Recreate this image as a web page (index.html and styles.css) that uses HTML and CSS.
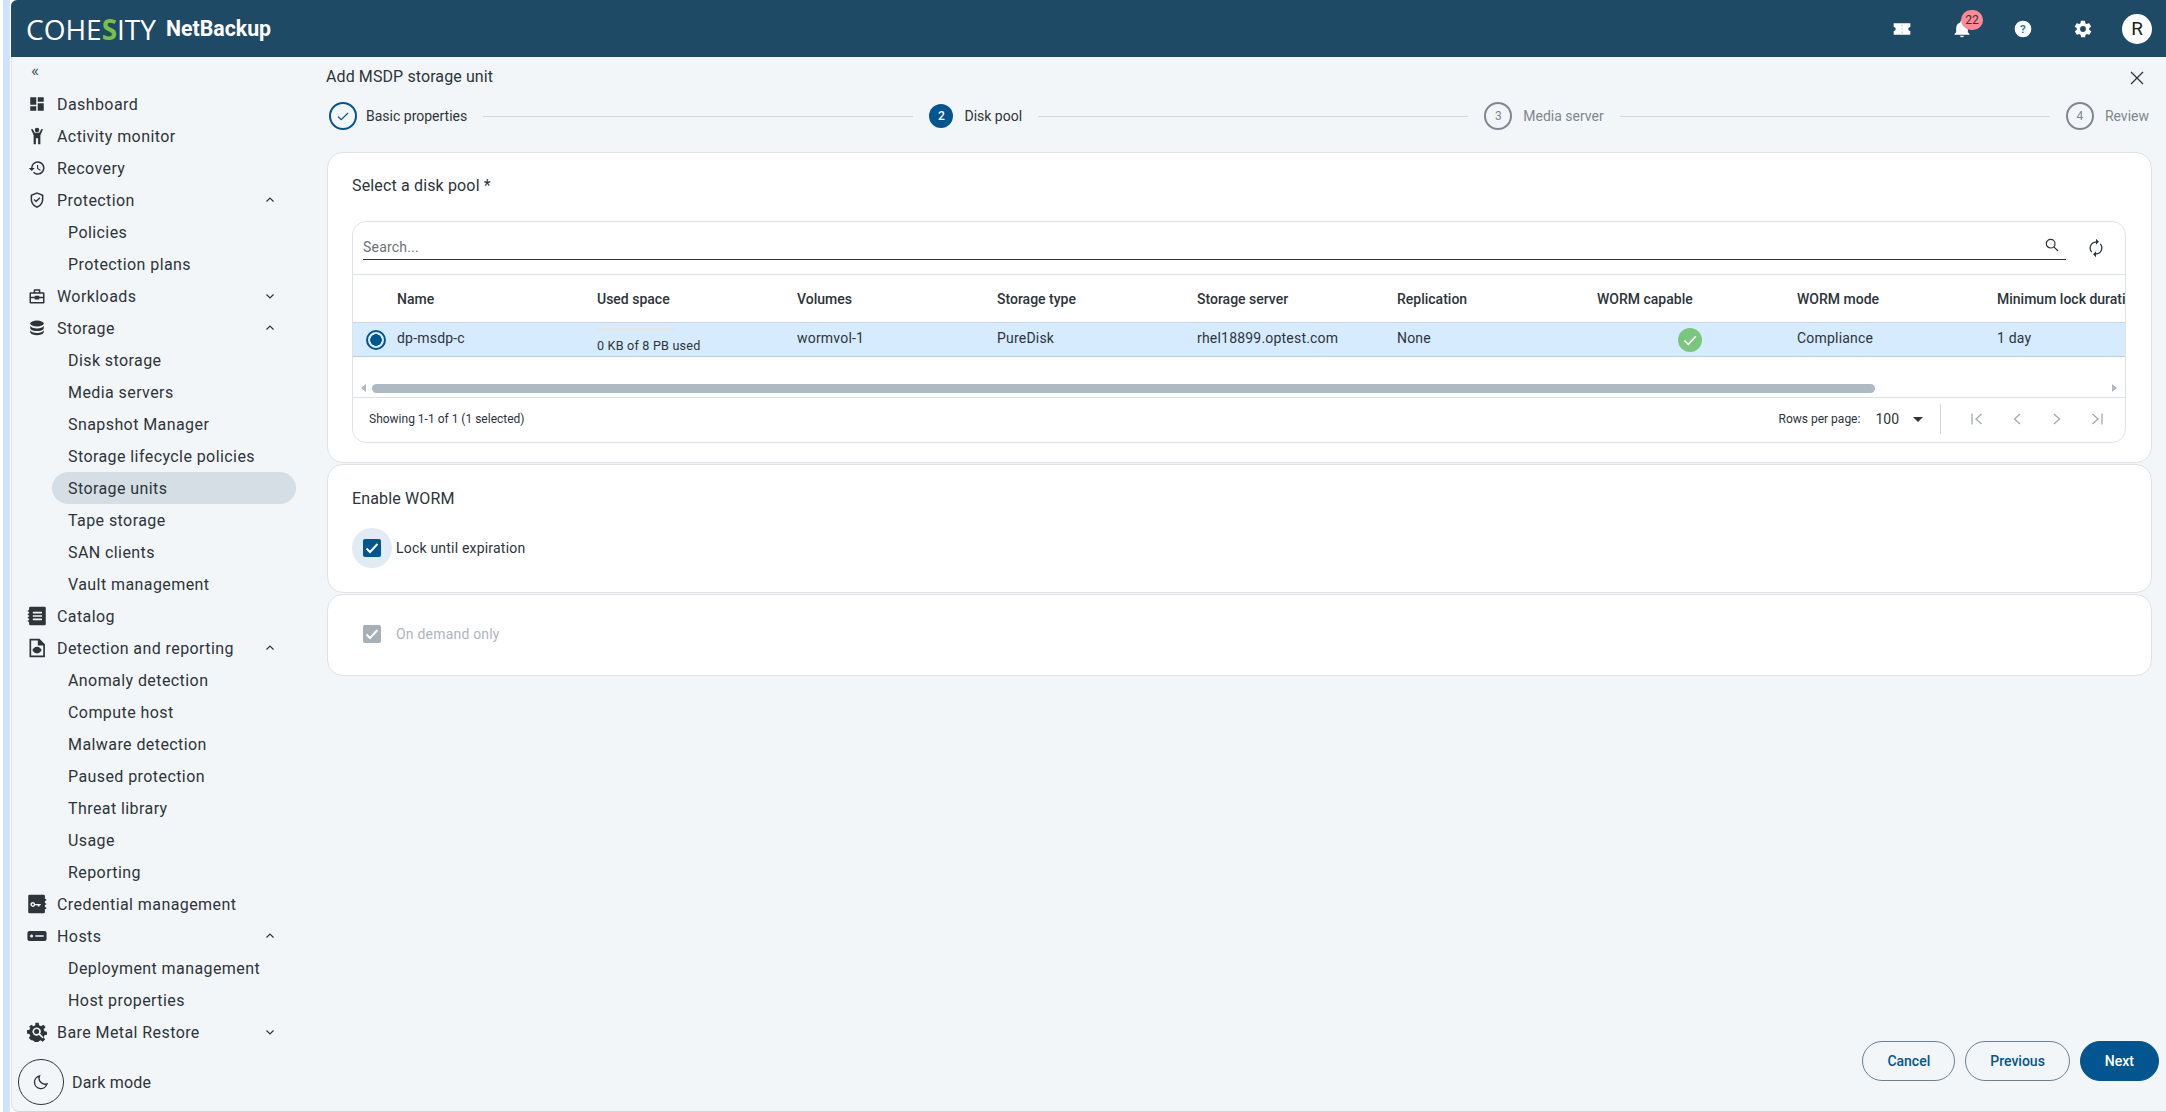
FILE: index.html
```html
<!DOCTYPE html>
<html lang="en">

<head>
	<meta charset="UTF-8">
	<title>Add MSDP storage unit</title>
	<link rel="stylesheet" href="styles.css">
</head>

<body>
	<div class="app">
		<header class="topbar">
			<div class="brand"><span class="logo">COHE<span class="logo-s">S</span>ITY</span><span class="product">NetBackup</span></div>
			<div class="top-icons">
				<svg class="top-icon" viewBox="0 0 24 24"><path fill="#fff" d="M2 5h20v4.500a2.500 2.500 0 0 0 0 5V19H2v-4.500a2.500 2.500 0 0 0 0-5z"/><path stroke="#9cc" stroke-width="1.500" stroke-dasharray="2 2" d="M12 7v11"/></svg>
				<div class="bell"><svg class="top-icon" viewBox="0 0 24 24"><path fill="#fff" d="M12 22a2.500 2.500 0 0 0 2.400-2H9.600A2.500 2.500 0 0 0 12 22zm7-6v-5c0-3.300-1.800-6-5-6.800V3.500a2 2 0 0 0-4 0v.700C6.800 5 5 7.700 5 11v5l-2 2v1h18v-1z"/></svg><span class="badge">22</span></div>
				<svg class="top-icon" viewBox="0 0 24 24"><circle cx="12" cy="12" r="10" fill="#fff"/><text x="12" y="17" text-anchor="middle" class="help-mark">?</text></svg>
				<svg class="top-icon" viewBox="0 0 24 24"><path fill="#fff" d="M19.400 13c0-.300.100-.700.100-1s0-.700-.100-1l2.100-1.600c.200-.200.200-.400.100-.600l-2-3.500c-.100-.200-.400-.300-.600-.200l-2.500 1c-.500-.400-1.100-.700-1.700-1l-.400-2.600c0-.300-.200-.400-.500-.400h-4c-.200 0-.500.100-.500.400l-.400 2.600c-.600.300-1.200.600-1.700 1l-2.500-1c-.200-.100-.500 0-.600.200l-2 3.500c-.100.200-.100.500.100.600L4.600 11c0 .300-.100.700-.100 1s0 .700.100 1l-2.100 1.600c-.200.200-.200.400-.100.600l2 3.500c.100.200.400.300.600.200l2.500-1c.500.400 1.100.700 1.700 1l.400 2.600c0 .300.300.400.500.400h4c.300 0 .500-.100.500-.400l.400-2.600c.600-.300 1.200-.600 1.700-1l2.500 1c.200.100.500 0 .600-.200l2-3.500c.100-.200.100-.500-.100-.600zM12 15.500a3.500 3.500 0 1 1 0-7 3.500 3.500 0 0 1 0 7z"/></svg>
				<div class="avatar">R</div>
			</div>
		</header>

		<div class="body-row">
			<nav class="sidebar">
				<div class="collapse">«</div>
				<ul class="nav">
					<li class="nav-item"><svg class="nav-icon" viewBox="0 0 24 24"><path d="M3 3h8v10H3zM13 3h8v6h-8zM13 11h8v10h-8zM3 15h8v6H3z"/></svg>Dashboard</li>
					<li class="nav-item"><svg class="nav-icon" viewBox="0 0 24 24"><circle cx="12" cy="4" r="3"/><path d="M4 3l2 -.5 3 5h6l3-5 2 .5-3.500 8v12h-3v-8h-3v8h-3V11z"/></svg>Activity monitor</li>
					<li class="nav-item"><svg class="nav-icon" viewBox="0 0 24 24"><path d="M13 3a9 9 0 0 0-9 9H1l4 4 4-4H6a7 7 0 1 1 2.100 5l-1.400 1.400A9 9 0 1 0 13 3zm-1 5v5l4.300 2.500.7-1.200-3.500-2.100V8z"/></svg>Recovery</li>
					<li class="nav-item"><svg class="nav-icon" viewBox="0 0 24 24"><path fill-rule="evenodd" d="M12 1.500L3.500 5v6c0 5.200 3.600 10 8.500 11.500 4.900-1.500 8.500-6.300 8.500-11.500V5zm0 2.200l6.500 2.700V11c0 4.200-2.800 8.200-6.500 9.400-3.700-1.200-6.500-5.200-6.500-9.400V6.400z"/><path d="M10.800 15.200l-3.300-3.300 1.300-1.300 2 2 4.400-4.400 1.300 1.300z"/></svg>Protection<svg class="chev" viewBox="0 0 12 12"><path d="M2.500 7.500L6 4l3.500 3.500"/></svg></li>
					<li class="nav-sub">Policies</li>
					<li class="nav-sub">Protection plans</li>
					<li class="nav-item"><svg class="nav-icon" viewBox="0 0 24 24"><path d="M9 3a1.500 1.500 0 0 0-1.500 1.500V7H3.500A1.500 1.500 0 0 0 2 8.500v12A1.500 1.500 0 0 0 3.500 22h17a1.500 1.500 0 0 0 1.500-1.500v-12A1.500 1.500 0 0 0 20.500 7h-4V4.500A1.500 1.500 0 0 0 15 3zm.500 2h5v2h-5zM4 9h16v4h-5v-1.500H9V13H4zm0 6h5v1.500h6V15h5v5H4z"/></svg>Workloads<svg class="chev" viewBox="0 0 12 12"><path d="M2.500 4.500L6 8l3.500-3.500"/></svg></li>
					<li class="nav-item"><svg class="nav-icon" viewBox="0 0 24 24"><ellipse cx="12" cy="6" rx="9" ry="4"/><path d="M3 9c1 2.500 5 3.500 9 3.500S20 11.500 21 9v3.500c-1 2.500-5 3.500-9 3.500s-8-1-9-3.500zM3 15c1 2.500 5 3.500 9 3.500s8-1 9-3.500v3c-1 2.500-5 3.500-9 3.500s-8-1-9-3.500z"/></svg>Storage<svg class="chev" viewBox="0 0 12 12"><path d="M2.500 7.500L6 4l3.500 3.500"/></svg></li>
					<li class="nav-sub">Disk storage</li>
					<li class="nav-sub">Media servers</li>
					<li class="nav-sub">Snapshot Manager</li>
					<li class="nav-sub">Storage lifecycle policies</li>
					<li class="nav-sub nav-active">Storage units</li>
					<li class="nav-sub">Tape storage</li>
					<li class="nav-sub">SAN clients</li>
					<li class="nav-sub">Vault management</li>
					<li class="nav-item"><svg class="nav-icon nav-icon-big" viewBox="0 0 24 24"><path fill-rule="evenodd" d="M4 1h17a1.500 1.500 0 0 1 1.500 1.500v19A1.500 1.500 0 0 1 21 23H4a1.500 1.500 0 0 1-1.500-1.500V19H1v-2h1.500v-2H1v-2h1.500v-2H1V9h1.500V7H1V5h1.500V2.500A1.500 1.500 0 0 1 4 1zM7 7v2h11V7zm0 4v2h11v-2zm0 4v2h11v-2z"/></svg>Catalog</li>
					<li class="nav-item"><svg class="nav-icon nav-icon-big" viewBox="0 0 24 24"><path fill-rule="evenodd" d="M3 1h12l6.500 6.500V23H3zm2 2v18h14.500V9H13V3z"/><path d="M12 10.500c-3 0-5 2.500-5.500 4 .5 1.500 2.500 4 5.500 4s5-2.500 5.500-4c-.5-1.500-2.500-4-5.500-4z"/></svg>Detection and reporting<svg class="chev" viewBox="0 0 12 12"><path d="M2.500 7.500L6 4l3.500 3.500"/></svg></li>
					<li class="nav-sub">Anomaly detection</li>
					<li class="nav-sub">Compute host</li>
					<li class="nav-sub">Malware detection</li>
					<li class="nav-sub">Paused protection</li>
					<li class="nav-sub">Threat library</li>
					<li class="nav-sub">Usage</li>
					<li class="nav-sub">Reporting</li>
					<li class="nav-item"><svg class="nav-icon nav-icon-big" viewBox="0 0 24 24"><path fill-rule="evenodd" d="M3 1h17a1.500 1.500 0 0 1 1.500 1.500V6H23v2h-1.500v3H23v2h-1.500v3H23v2h-1.500v3.500A1.500 1.500 0 0 1 20 23H3a1.500 1.500 0 0 1-1.500-1.500v-19A1.500 1.500 0 0 1 3 1zm4 8.500a3 3 0 1 0 2.800 4h3v1.500H15v-1.500h1.500V12H9.800A3 3 0 0 0 7 9.500zm0 1.800a1.200 1.200 0 1 1 0 2.400 1.200 1.200 0 0 1 0-2.400z"/></svg>Credential management</li>
					<li class="nav-item"><svg class="nav-icon nav-icon-big" viewBox="0 0 24 24"><path fill-rule="evenodd" d="M3 6h18a2.500 2.500 0 0 1 2.500 2.500v7A2.500 2.500 0 0 1 21 18H3a2.500 2.500 0 0 1-2.500-2.500v-7A2.500 2.500 0 0 1 3 6zm2.500 4.200a1.800 1.800 0 1 0 0 3.600 1.800 1.800 0 0 0 0-3.600zM10 11v2h10v-2z"/></svg>Hosts<svg class="chev" viewBox="0 0 12 12"><path d="M2.500 7.500L6 4l3.500 3.500"/></svg></li>
					<li class="nav-sub">Deployment management</li>
					<li class="nav-sub">Host properties</li>
					<li class="nav-item"><svg class="nav-icon nav-icon-big" viewBox="0 0 24 24"><path fill-rule="evenodd" d="M10 1h4l.6 3 2.300 1 2.600-1.700 2.800 2.800L20 8.700l1 2.300 3 .6v3.800l-3 .6-1 2.300 1.700 2.600-2.800 2.800-2.600-1.700-2.300 1-.6 3h-4l-.6-3-2.300-1L5 22l-2.800-2.800 1.700-2.600-1-2.300-2.900-.6v-3.800l3-.6 1-2.300L2.300 6.100 5.100 3.300 7.700 5 10 4zM11.500 6.500a5 5 0 1 0 2.900 9.100l4 4 1.400-1.400-4-4a5 5 0 0 0-4.300-7.700zm0 2a3 3 0 1 1 0 6 3 3 0 0 1 0-6z"/></svg>Bare Metal Restore<svg class="chev" viewBox="0 0 12 12"><path d="M2.500 4.500L6 8l3.500-3.500"/></svg></li>
				</ul>
				<div class="dark-mode">
					<div class="moon"><svg viewBox="0 0 24 24"><path d="M10 4a8.500 8.500 0 1 0 10 10.500A8 8 0 0 1 10 4z"/></svg></div>
					<span>Dark mode</span>
				</div>
			</nav>

			<main class="main">
				<div class="title-row">
					<h1>Add MSDP storage unit</h1>
					<svg class="close" viewBox="0 0 16 16"><path d="M2 2l12 12M14 2L2 14"/></svg>
				</div>

				<ol class="stepper">
					<li class="step step-done"><span class="step-mark"><svg viewBox="0 0 16 16"><path d="M3 8.500l3.200 3.200L13 5"/></svg></span><span class="step-name">Basic properties</span></li>
					<li class="step-line"></li>
					<li class="step step-current"><span class="step-mark">2</span><span class="step-name">Disk pool</span></li>
					<li class="step-line"></li>
					<li class="step step-todo"><span class="step-mark">3</span><span class="step-name">Media server</span></li>
					<li class="step-line"></li>
					<li class="step step-todo"><span class="step-mark">4</span><span class="step-name">Review</span></li>
				</ol>

				<section class="card card-pool">
					<h2 class="card-title">Select a disk pool *</h2>
					<div class="table-box">
						<div class="search-row">
							<div class="search-field">
								<span>Search...</span>
								<svg class="search-icon" viewBox="0 0 24 24"><circle cx="10" cy="10" r="6.500"/><path d="M14.800 14.800L21 21"/></svg>
							</div>
							<svg class="refresh" viewBox="0 0 24 24"><path d="M12 5a7 7 0 0 0-5 11.900M12 19a7 7 0 0 0 5-11.900"/><path class="solid" d="M12 1v7l3.500-3.500zM12 23v-7l-3.500 3.500z"/></svg>
						</div>
						<div class="grid-wrap">
							<div class="grid-row grid-head">
								<div class="cell-radio"></div>
								<div class="cell">Name</div>
								<div class="cell">Used space</div>
								<div class="cell">Volumes</div>
								<div class="cell">Storage type</div>
								<div class="cell">Storage server</div>
								<div class="cell">Replication</div>
								<div class="cell">WORM capable</div>
								<div class="cell">WORM mode</div>
								<div class="cell">Minimum lock duration</div>
							</div>
							<div class="grid-row grid-selected">
								<div class="cell-radio"><span class="radio"></span></div>
								<div class="cell">dp-msdp-c</div>
								<div class="cell cell-usage"><span class="usage-bar"></span><span class="usage-text">0 KB of 8 PB used</span></div>
								<div class="cell">wormvol-1</div>
								<div class="cell">PureDisk</div>
								<div class="cell">rhel18899.optest.com</div>
								<div class="cell">None</div>
								<div class="cell cell-ok"><svg viewBox="0 0 24 24"><circle cx="12" cy="12" r="12" fill="#7bc67e"/><path d="M6.500 12.500l3.800 3.800 7.500-8" fill="none" stroke="#fff" stroke-width="1.600"/></svg></div>
								<div class="cell">Compliance</div>
								<div class="cell">1 day</div>
							</div>
						</div>
						<div class="scroll-row">
							<span class="arrow-left"></span>
							<div class="scroll-track"><div class="scroll-thumb"></div></div>
							<span class="arrow-right"></span>
						</div>
						<div class="table-foot">
							<span class="showing">Showing 1-1 of 1 (1 selected)</span>
							<div class="pager">
								<span class="rows-label">Rows per page:</span>
								<span class="rows-value">100</span>
								<span class="rows-caret"></span>
								<span class="pager-sep"></span>
								<svg class="page-btn" viewBox="0 0 16 16"><path d="M3 2.500v11M12.500 3L7 8l5.500 5"/></svg>
								<svg class="page-btn" viewBox="0 0 16 16"><path d="M11 3L5.500 8l5.500 5"/></svg>
								<svg class="page-btn" viewBox="0 0 16 16"><path d="M5 3l5.500 5L5 13"/></svg>
								<svg class="page-btn" viewBox="0 0 16 16"><path d="M13 2.500v11M3.500 3L9 8l-5.500 5"/></svg>
							</div>
						</div>
					</div>
				</section>

				<section class="card card-worm">
					<h2 class="card-title">Enable WORM</h2>
					<div class="check-row">
						<span class="check-halo"><span class="check"><svg viewBox="0 0 18 18"><path d="M3.500 9.500l3.500 3.500 7.500-8"/></svg></span></span>
						<span>Lock until expiration</span>
					</div>
				</section>

				<section class="card card-demand">
					<div class="check-row check-off">
						<span class="check-halo"><span class="check"><svg viewBox="0 0 18 18"><path d="M3.500 9.500l3.500 3.500 7.500-8"/></svg></span></span>
						<span>On demand only</span>
					</div>
				</section>

				<div class="actions">
					<button class="btn">Cancel</button>
					<button class="btn">Previous</button>
					<button class="btn btn-primary">Next</button>
				</div>
			</main>
		</div>
	</div>
</body>

</html>
```

FILE: styles.css
```css
* {
	box-sizing: border-box;
}

html,
body {
	height: 100%;
}

body {
	margin: 0;
	background: #fff;
	font-family: Roboto, "Liberation Sans", sans-serif;
	color: #2d343a;
	overflow: hidden;
}

.app {
	height: 1112px;
	margin-left: 3px;
	border-left: 7px solid #cfe2ff;
	display: flex;
	flex-direction: column;
	overflow: hidden;
}

.topbar {
	height: 57px;
	flex: none;
	margin-left: 1px;
	background: #1f4a66;
	display: flex;
	align-items: center;
	justify-content: space-between;
	padding: 0 14px 0 15px;
	border-top-left-radius: 6px;
}

.brand {
	display: flex;
	align-items: center;
	gap: 10px;
}

.logo {
	font-family: "Open Sans", "Liberation Sans", sans-serif;
	font-size: 28px;
	font-weight: 500;
	color: #fff;
}

.logo-s {
	color: #7ac143;
	font-weight: 700;
}

.product {
	font-size: 21.300px;
	font-weight: 700;
	color: #fff;
}

.top-icons {
	display: flex;
	align-items: center;
}

.top-icon {
	width: 20px;
	height: 20px;
	display: block;
}

.top-icons>.top-icon:first-child {
	margin-right: 40px;
}

.bell {
	position: relative;
	margin-right: 41px;
}

.badge {
	position: absolute;
	left: 9px;
	top: -9px;
	width: 22px;
	height: 20px;
	border-radius: 10px;
	background: #ff8a94;
	color: #2d343a;
	font-size: 12px;
	line-height: 20px;
	text-align: center;
}

.help-mark {
	font: 700 14px Roboto, sans-serif;
	fill: #2a78b8;
}

.top-icons>.top-icon:nth-child(3) {
	margin-right: 40px;
}

.top-icons>.top-icon:nth-child(4) {
	margin-right: 29px;
}

.avatar {
	width: 30px;
	height: 30px;
	border-radius: 50%;
	background: #fff;
	color: #222;
	font-size: 19px;
	line-height: 30px;
	text-align: center;
}

.body-row {
	flex: 1;
	min-height: 0;
	margin-left: 1px;
	border-left: 1px solid #dfe3e6;
	border-bottom: 1px solid #d3d6d8;
	border-bottom-left-radius: 8px;
	background: #f3f6f8;
	display: flex;
}

.sidebar {
	width: 303px;
	flex: none;
	position: relative;
	padding-left: 16px;
}

.collapse {
	height: 31px;
	font-size: 17px;
	line-height: 26px;
	padding-left: 3px;
	color: #44505a;
}

.nav {
	list-style: none;
	margin: 0;
	padding: 0;
}

.nav-item,
.nav-sub {
	height: 32px;
	display: flex;
	align-items: center;
	font-size: 16px;
	letter-spacing: 0.42px;
	white-space: nowrap;
}

.nav-icon {
	width: 18px;
	height: 18px;
	margin-right: 11px;
	flex: none;
	fill: #2d343a;
}

.nav-icon-big {
	width: 20px;
	height: 20px;
	margin-left: -1px;
	margin-right: 10px;
}

.chev {
	width: 12px;
	height: 12px;
	position: absolute;
	left: 252px;
	fill: none;
	stroke: #2d343a;
	stroke-width: 1.200;
}

.nav-sub {
	width: 244px;
	padding-left: 16px;
	margin-left: 24px;
}

.nav-active {
	background: #d5dee5;
	border-radius: 16px;
}

.dark-mode {
	position: absolute;
	left: 6px;
	top: 1002px;
	display: flex;
	align-items: center;
	gap: 8px;
	font-size: 16px;
	letter-spacing: 0.2px;
}

.moon {
	width: 46px;
	height: 46px;
	border: 1px solid #2d343a;
	border-radius: 50%;
	display: flex;
	align-items: center;
	justify-content: center;
}

.moon svg {
	width: 18px;
	height: 18px;
	fill: none;
	stroke: #2d343a;
	stroke-width: 1.800;
}

.main {
	flex: 1;
	min-width: 0;
	position: relative;
	padding: 0 14px 0 12px;
}

.title-row {
	height: 38px;
	display: flex;
	align-items: center;
	justify-content: space-between;
}

h1 {
	margin: 0 0 0 -1px;
	font-size: 16px;
	font-weight: 400;
	letter-spacing: 0.1px;
	color: #2d343a;
}

.close {
	width: 16px;
	height: 16px;
	margin-right: 7px;
	margin-top: 3px;
	fill: none;
	stroke: #2d343a;
	stroke-width: 1.300;
}

.stepper {
	list-style: none;
	margin: 0 3px 0 0;
	padding: 0 0 0 2px;
	height: 42px;
	display: flex;
	align-items: center;
}

.step {
	display: flex;
	align-items: center;
	gap: 11px;
	font-size: 14px;
	white-space: nowrap;
}

.step-done {
	gap: 9px;
}

.step-line {
	flex: 1;
	height: 1px;
	background: #d3d6d8;
	margin: 0 16px;
}

.step-mark {
	width: 24px;
	height: 24px;
	border-radius: 50%;
	display: flex;
	align-items: center;
	justify-content: center;
	font-size: 12px;
}

.step-done .step-mark {
	width: 28px;
	height: 28px;
	border: 2px solid #03558f;
}

.step-done svg {
	width: 16px;
	height: 16px;
	fill: none;
	stroke: #03558f;
	stroke-width: 1.200;
}

.step-current .step-mark {
	background: #03558f;
	color: #fff;
	font-weight: 500;
}

.step-todo {
	color: #7f878d;
}

.step-todo .step-mark {
	width: 28px;
	height: 28px;
	border: 2px solid #80878d;
}

.card {
	background: #fff;
	border: 1px solid #dfe3e6;
	border-radius: 16px;
	margin-top: 1px;
}

.card-pool {
	height: 311px;
	margin-top: 15px;
	padding: 0 25px 0 24px;
}

.card-title {
	margin: 0;
	font-size: 16px;
	font-weight: 400;
	letter-spacing: 0.15px;
	color: #2d343a;
}

.card-pool .card-title {
	padding-top: 23px;
	height: 68px;
}

.table-box {
	border: 1px solid #dfe3e6;
	border-radius: 14px;
	overflow: hidden;
	height: 222px;
}

.search-row {
	height: 53px;
	display: flex;
	align-items: flex-start;
	padding-left: 10px;
	border-bottom: 1px solid #dfe3e6;
}

.search-field {
	flex: 1;
	height: 26px;
	margin-top: 12px;
	border-bottom: 1px solid #2d343a;
	display: flex;
	align-items: center;
	justify-content: space-between;
	font-size: 14px;
	letter-spacing: 0.2px;
	color: #6b7277;
}

.search-icon {
	width: 16px;
	height: 16px;
	margin-right: 6px;
	margin-bottom: 3px;
	fill: none;
	stroke: #2d343a;
	stroke-width: 1.800;
}

.refresh {
	width: 20px;
	height: 20px;
	margin: 16px 19px 0 20px;
	fill: none;
	stroke: #2d343a;
	stroke-width: 1.500;
}

.refresh .solid {
	fill: #2d343a;
	stroke: none;
}

.grid-wrap {
	overflow: hidden;
}

.grid-row {
	display: flex;
	width: 1900px;
	align-items: center;
	font-size: 14px;
	white-space: nowrap;
}

.grid-head {
	height: 47px;
	font-weight: 500;
}

.grid-selected {
	height: 35px;
	padding-bottom: 3px;
	background: #d6ebfd;
	border-top: 1px solid #cbd6de;
	border-bottom: 1px solid #b9cfe0;
	letter-spacing: 0.2px;
}

.cell-radio {
	width: 44px;
	flex: none;
	padding-left: 13px;
}

.radio {
	display: block;
	width: 20px;
	height: 20px;
	margin-top: 3px;
	border: 2px solid #03558f;
	border-radius: 50%;
	background: radial-gradient(circle, #03558f 0 5.500px, transparent 6px);
}

.cell {
	width: 200px;
	flex: none;
}

.cell:last-child {
	width: 160px;
}

.cell-usage {
	height: 100%;
	display: flex;
	flex-direction: column;
	padding-top: 5px;
}

.usage-bar {
	width: 78px;
	height: 4px;
	background: #e3e6e8;
}

.usage-text {
	font-size: 12.600px;
	margin-top: 7px;
}

.cell-ok {
	padding-left: 81px;
	height: 24px;
	margin-top: 3px;
}

.cell-ok svg {
	width: 24px;
	height: 24px;
	display: block;
}

.scroll-row {
	height: 18px;
	display: flex;
	align-items: center;
	padding: 0 8px;
	margin-top: 22px;
}

.arrow-left,
.arrow-right {
	width: 0;
	height: 0;
	border-top: 4.500px solid transparent;
	border-bottom: 4.500px solid transparent;
}

.arrow-left {
	border-right: 5px solid #aeb9c3;
}

.arrow-right {
	border-left: 5px solid #aeb9c3;
}

.scroll-track {
	flex: 1;
	padding: 0 6px;
}

.scroll-thumb {
	width: 86.700%;
	height: 9px;
	border-radius: 5px;
	background: #aeb9c3;
}

.table-foot {
	height: 47px;
	border-top: 1px solid #dfe3e6;
	display: flex;
	align-items: center;
	justify-content: space-between;
	padding: 0 20px 4px 16px;
	font-size: 12px;
}

.pager {
	display: flex;
	align-items: center;
}

.rows-value {
	font-size: 14px;
	margin-left: 15px;
}

.rows-caret {
	margin: 0 0 0 14px;
	width: 0;
	height: 0;
	border-left: 5px solid transparent;
	border-right: 5px solid transparent;
	border-top: 5px solid #2d343a;
}

.pager-sep {
	width: 1px;
	height: 30px;
	background: #d3d6d8;
	margin: 0 28px 0 17px;
}

.page-btn {
	width: 16px;
	height: 16px;
	margin-right: 24px;
	fill: none;
	stroke: #a2aab0;
	stroke-width: 1.300;
}

.page-btn:last-child {
	margin-right: 0;
}

.card-worm {
	height: 129px;
	padding: 24px 25px 0 24px;
}

.check-row {
	display: flex;
	align-items: center;
	font-size: 14px;
	letter-spacing: 0.2px;
	gap: 4px;
}

.card-worm .check-row {
	margin-top: 20px;
}

.check-halo {
	width: 40px;
	height: 40px;
	border-radius: 50%;
	background: #e1ebf3;
	display: flex;
	align-items: center;
	justify-content: center;
}

.check {
	width: 18px;
	height: 18px;
	border-radius: 2px;
	background: #03558f;
	display: block;
}

.check svg {
	display: block;
	fill: none;
	stroke: #fff;
	stroke-width: 2;
}

.card-demand {
	height: 82px;
	padding: 19px 25px 0 24px;
}

.check-off {
	color: #aeb6bc;
}

.check-off .check-halo {
	background: none;
}

.check-off .check {
	background: #a8b0b6;
}

.actions {
	position: absolute;
	right: 7px;
	top: 984px;
	display: flex;
	gap: 10px;
}

.btn {
	height: 40px;
	padding: 0 24px;
	border: 1px solid #6e7f90;
	border-radius: 20px;
	background: transparent;
	color: #03558f;
	font: 500 14px Roboto, sans-serif;
}

.btn-primary {
	background: #03558f;
	border-color: #03558f;
	color: #fff;
}
```
